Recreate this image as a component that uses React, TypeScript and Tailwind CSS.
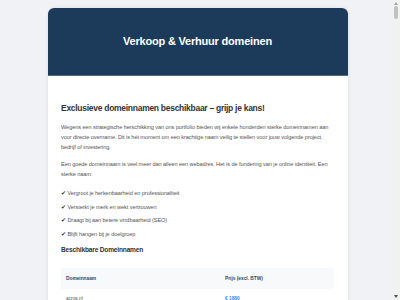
const domains = [
  { name: 'acros.nl', price: '€ 1880' },
  { name: 'bouwkeur.nl', price: '€ 1450' },
  { name: 'datavak.nl', price: '€ 990' },
];

const benefits = [
  'Vergroot je herkenbaarheid en professionaliteit',
  'Versterkt je merk en wekt vertrouwen',
  'Draagt bij aan betere vindbaarheid (SEO)',
  'Blijft hangen bij je doelgroep',
];

export default function App() {
  return (
    <div
      className="h-[300px] flex overflow-hidden bg-[#f0f2f5]"
      style={{ fontFamily: '"Liberation Sans", Arial, sans-serif' }}
    >
      <div className="flex-1 min-w-0 pl-[2.5px] pt-[8px]">
        <div className="w-[300px] mx-auto bg-white rounded-[6px] overflow-hidden shadow-[0_0_4px_rgba(0,0,0,0.08)]">
          {/* Header */}
          <div className="h-[68px] flex items-center justify-center bg-[#1c3b5a] border-b border-[#4d6a88]">
            <h1 className="text-[11px] tracking-[-0.2px] font-bold text-white">Verkoop &amp; Verhuur domeinen</h1>
          </div>

          {/* Body */}
          <div className="px-[13.5px] pt-[26px] pb-6">
            <h2 className="text-[8.5px] tracking-[-0.28px] leading-[12.5px] font-bold text-[#333]">
              Exclusieve domeinnamen beschikbaar – grijp je kans!
            </h2>
            <p className="mt-[7.5px] text-[5.6px] tracking-[-0.08px] leading-[10px] text-[#555]">
              Wegens een strategische herschikking van ons portfolio bieden wij enkele honderden sterke domeinnamen aan
              voor directe overname. Dit is hét moment om een krachtige naam veilig te stellen voor jouw volgende project,
              bedrijf of investering.
            </p>
            <p className="mt-[7px] text-[5.6px] tracking-[-0.08px] leading-[10px] text-[#555]">
              Een goede domeinnaam is veel meer dan alleen een webadres. Het is de fundering van je online identiteit. Een
              sterke naam:
            </p>
            <ul className="mt-[9px] space-y-[3.5px] text-[5.6px] tracking-[-0.08px] leading-[10px] text-[#555]">
              {benefits.map((b) => (
                <li key={b}>
                  <span className="text-[#333]">✔</span> {b}
                </li>
              ))}
            </ul>
            <h3 className="mt-[6.7px] text-[6.6px] tracking-[-0.19px] leading-[10px] font-bold text-[#333]">
              Beschikbare Domeinnamen
            </h3>

            <table className="mt-[12.5px] w-full table-fixed text-[4.8px] text-left border-collapse">
              <colgroup>
                <col className="w-[159px]" />
                <col />
              </colgroup>
              <thead>
                <tr className="bg-[#f8f9fa] h-[21px]">
                  <th className="px-[5px] font-bold text-[#2c4a6b]">Domeinnaam</th>
                  <th className="px-[5px] font-bold text-[#2c4a6b]">Prijs (excl. BTW)</th>
                </tr>
              </thead>
              <tbody>
                {domains.map((d) => (
                  <tr key={d.name} className="h-[21px] border-b border-[#eee]">
                    <td className="px-[5px] text-[#555]">{d.name}</td>
                    <td className="px-[5px] font-bold text-[#3b82f6]">{d.price}</td>
                  </tr>
                ))}
              </tbody>
            </table>
          </div>
        </div>
      </div>

      {/* scrollbar */}
      <div className="w-[7.5px] shrink-0 bg-[#f1f1f1] flex flex-col items-center">
        <svg width="4" height="3" viewBox="0 0 4 3" className="mt-[2px] shrink-0">
          <path d="M2 0 L4 3 L0 3 Z" fill="#a3a3a3" />
        </svg>
        <div className="mt-[1px] w-[3.7px] h-[13.3px] rounded-[2px] bg-[#c1c1c1]" />
        <div className="flex-1" />
        <svg width="4" height="3" viewBox="0 0 4 3" className="mb-[2.5px] shrink-0">
          <path d="M0 0 L4 0 L2 3 Z" fill="#505050" />
        </svg>
      </div>
    </div>
  );
}
